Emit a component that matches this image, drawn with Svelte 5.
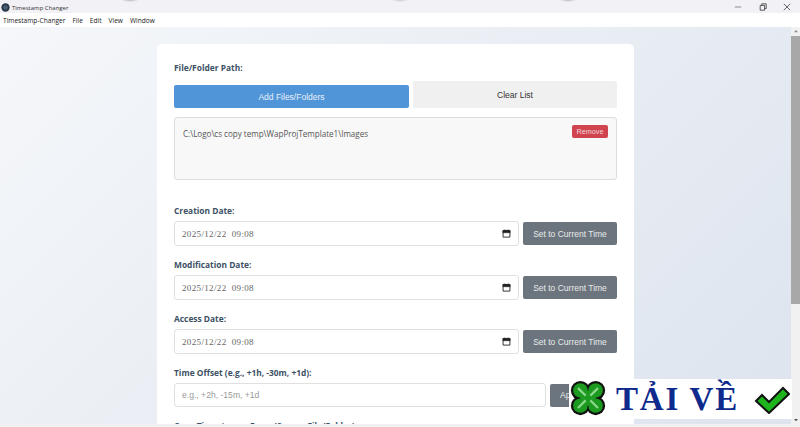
<script>
  const dates = ['Creation Date:', 'Modification Date:', 'Access Date:'];
</script>

<div class="window">
  <header class="titlebar">
    <div class="title">
      <svg class="appicon" viewBox="0 0 10 10" width="9" height="9"><circle cx="5" cy="5" r="4.6" fill="#27384a"/><circle cx="5" cy="5" r="2.6" fill="#4b5f73"/></svg>
      <span>Timestamp Changer</span>
    </div>
    <div class="controls">
      <svg viewBox="0 0 10 10" width="8" height="8"><path d="M1 5h8" stroke="#777" fill="none"/></svg>
      <svg viewBox="0 0 10 10" width="8" height="8"><path d="M1.5 3h5.5v6h-5.5zM3.5 3v-2h5.5v6h-2" stroke="#333" fill="none"/></svg>
      <svg viewBox="0 0 10 10" width="8" height="8"><path d="M1 1l8 8M9 1l-8 8" stroke="#444" fill="none"/></svg>
    </div>
  </header>
  <nav class="menubar">
    <span>Timestamp-Changer</span><span>File</span><span>Edit</span><span>View</span><span>Window</span>
  </nav>
  <div class="viewport">
    <main class="page">
      <section class="card">
        <div class="label first">File/Folder Path:</div>
        <div class="actions">
          <button class="btn add">Add Files/Folders</button>
          <button class="btn clear">Clear List</button>
        </div>
        <div class="list">
          <span class="path">C:\Logo\cs copy temp\WapProjTemplate1\Images</span>
          <button class="remove">Remove</button>
        </div>
        <div class="dates">
          {#each dates as d}
            <div class="label">{d}</div>
            <div class="row">
              <div class="input date">
                <span class="stamp">2025/12/22&nbsp;&nbsp;09:08</span>
                <svg viewBox="0 0 10 10" width="9" height="9"><path d="M1.2 2h7.6v7h-7.6z" fill="none" stroke="#222"/><path d="M1 1.5h8v2.6h-8zM3 .5v1.5M7 .5v1.5" fill="#222" stroke="#222" stroke-width=".6"/></svg>
              </div>
              <button class="btn grey">Set to Current Time</button>
            </div>
          {/each}
          <div class="label">Time Offset (e.g., +1h, -30m, +1d):</div>
          <div class="row">
            <div class="input offset"><span class="hint">e.g., +2h, -15m, +1d</span></div>
            <button class="btn grey apply">Apply</button>
          </div>
          <div class="label next">Copy Timestamps From (Source File/Folder):</div>
        </div>
      </section>
    </main>
    <div class="scrollbar">
      <svg viewBox="0 0 8 8" width="8" height="8"><path d="M2 5.2L4 3l2 2.2z" fill="#8a8a8a"/></svg>
      <div class="thumb"></div>
      <svg class="down" viewBox="0 0 8 8" width="8" height="8"><path d="M2 3L4 5.2 6 3z" fill="#555"/></svg>
    </div>
  </div>
  <div class="bottomline"></div>

  <aside class="promo">
    <svg class="clover" viewBox="0 0 40 40" width="38" height="38">
      <g fill="#111">
        <circle cx="12" cy="11" r="10"/><circle cx="28" cy="11" r="10"/><circle cx="12" cy="27" r="10"/><circle cx="28" cy="27" r="10"/>
      </g>
      <g fill="#1c9a20">
        <circle cx="12" cy="11" r="7.6"/><circle cx="28" cy="11" r="7.6"/><circle cx="12" cy="27" r="7.6"/><circle cx="28" cy="27" r="7.6"/>
        <path d="M12 11h16v16h-16z"/>
      </g>
      <path d="M9.500 8.500l8 8M30.500 8.500l-8 8M9.500 29.500l8-8M30.500 29.500l-8-8" stroke="#8ad68a" stroke-width="2.4" fill="none"/>
    </svg>
    <span class="promotext">TẢI VỀ</span>
    <svg class="check" viewBox="0 0 36 28" width="36" height="28">
      <path d="M2 15l6-6 7 7L29 2l6 6-20 19z" fill="#1db41d" stroke="#111" stroke-width="2" stroke-linejoin="miter"/>
    </svg>
  </aside>
</div>

<style>
  :global(body) { margin: 0; }
  .window {
    position: relative;
    width: 800px;
    height: 427px;
    overflow: hidden;
    display: flex;
    flex-direction: column;
    background: #fff;
    font-family: "Liberation Sans", Arial, sans-serif;
  }
  .titlebar {
    height: 13px;
    flex: none;
    background:
      radial-gradient(ellipse 9px 2px at 130px 0, #bbb, transparent),
      radial-gradient(ellipse 9px 2px at 400px 0, #ccc, transparent),
      radial-gradient(ellipse 9px 2px at 568px 0, #bbb, transparent),
      #f1f1f6;
    display: flex;
    align-items: center;
    justify-content: space-between;
  }
  .title {
    display: flex;
    align-items: center;
    gap: 2px;
    padding-left: 1px;
    padding-top: 2px;
    font: 6px "Open Sans", sans-serif;
    color: #333;
  }
  .controls {
    display: flex;
    gap: 16.5px;
    padding-right: 9px;
    align-items: center;
    padding-top: 1px;
  }
  .menubar {
    height: 14px;
    flex: none;
    background: #fff;
    display: flex;
    align-items: center;
    gap: 7px;
    padding-left: 3px;
    font: 6.6px "Open Sans", sans-serif;
    color: #222;
  }
  .viewport {
    flex: 1;
    min-height: 0;
    display: flex;
  }
  .page {
    flex: 1;
    min-width: 0;
    overflow: hidden;
    padding-top: 17px;
    background: linear-gradient(135deg, #f5f7fa 0%, #dde4ee 100%);
  }
  .card {
    width: 443px;
    margin: 0 auto;
    padding: 17px;
    background: #fff;
    border-radius: 5px;
  }
  .label {
    font: 700 8.4px/11px "Open Sans", sans-serif;
    color: #3d5166;
    margin-bottom: 5px;
  }
  .label.first { margin: 1px 0 8px; }
  .actions { display: flex; gap: 4px; align-items: flex-end; }
  .btn {
    border: 0;
    border-radius: 2px;
    font: 8.5px "Liberation Sans", Arial, sans-serif;
    padding: 0;
  }
  .add { flex: 235 0 0; height: 23px; background: #5095d8; color: #e8f0f8; }
  .clear { flex: 204 0 0; height: 27px; background: #f0f0f0; color: #333; }
  .list {
    margin-top: 9px;
    height: 61px;
    border: 1px solid #dedede;
    border-radius: 3px;
    background: #f8f8f8;
    display: flex;
    justify-content: space-between;
    align-items: flex-start;
    padding: 0 8px;
  }
  .path { font: 8.05px/11px "Open Sans", sans-serif; color: #555; margin-top: 10px; }
  .remove {
    margin-top: 7px;
    border: 0;
    padding: 0;
    width: 36px;
    height: 13px;
    border-radius: 2px;
    background: #d0444f;
    color: #f3d6d9;
    font: 7.2px "Liberation Sans", Arial, sans-serif;
  }
  .dates { margin-top: 25px; }
  .row { display: flex; align-items: center; gap: 4px; margin-bottom: 13px; }
  .input {
    box-sizing: border-box;
    height: 25px;
    border: 1px solid #e0e0e0;
    border-radius: 3px;
    background: #fff;
    display: flex;
    align-items: center;
    justify-content: space-between;
    padding: 0 7px;
  }
  .date { width: 345px; }
  .offset { flex: 0 0 372px; height: 24px; }
  .stamp { font: 9px "Liberation Serif", serif; letter-spacing: .35px; color: #666; }
  .hint { font: 8.6px "Liberation Sans", Arial, sans-serif; color: #999; }
  .grey {
    width: 94px;
    height: 23px;
    flex: none;
    background: #6c757d;
    color: #e8eaec;
    white-space: nowrap;
  }
  .apply { flex: 1; text-align: left; padding-left: 10px; }
  .scrollbar {
    width: 9px;
    flex: none;
    background: #f1f1f1;
    display: flex;
    flex-direction: column;
    align-items: center;
  }
  .thumb { width: 9px; height: 268px; background: #a8a8a8; margin-top: 1px; }
  .down { margin-top: auto; }
  .bottomline { height: 3px; flex: none; background: #f1f1f1; }
  .promo {
    position: absolute;
    left: 569px;
    top: 379px;
    width: 223px;
    height: 40px;
    background: #fff;
    display: flex;
    align-items: center;
  }
  .clover { flex: none; }
  .promotext {
    margin-left: 9px;
    font: 700 33px/40px "Liberation Serif", serif;
    color: #0d2a8c;
    white-space: nowrap;
    letter-spacing: 1.8px;
  }
  .check { margin-left: auto; margin-right: 2px; margin-top: 2px; }
</style>
